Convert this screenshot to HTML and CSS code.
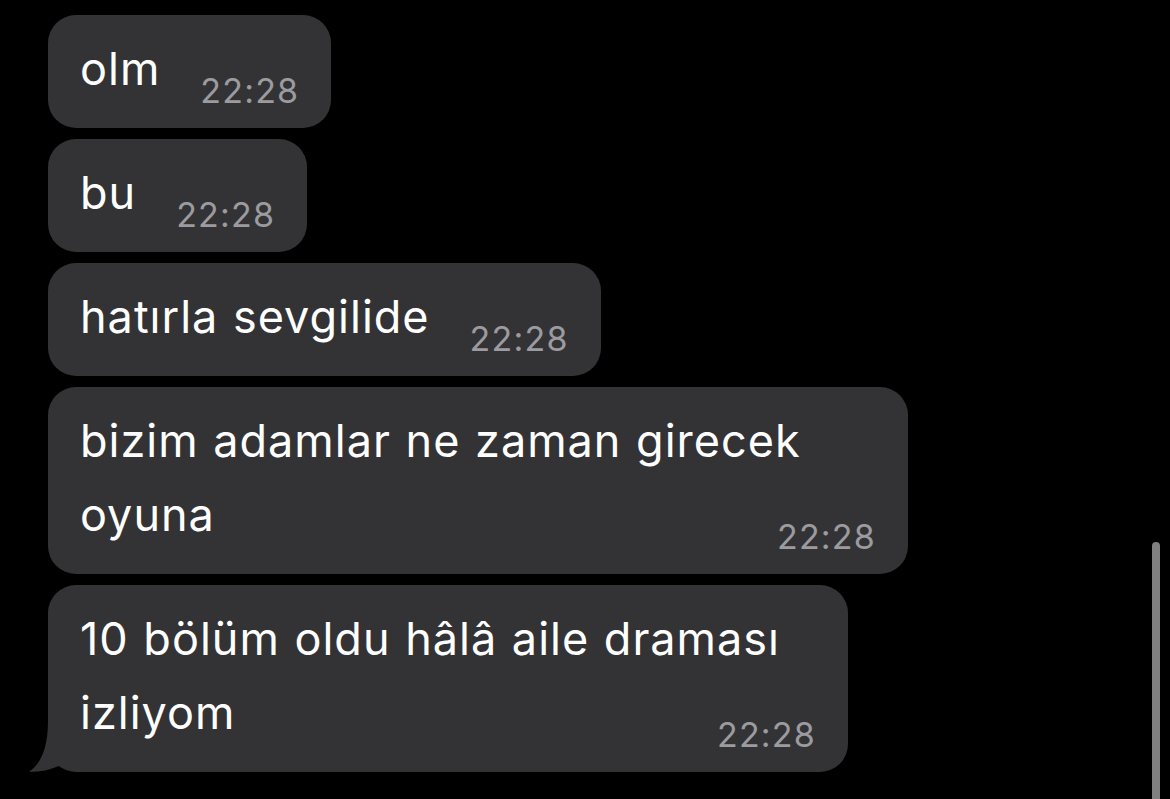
FILE: index.html
```html
<!DOCTYPE html>
<html lang="tr">
<head>
<meta charset="utf-8">
<title>Chat</title>
<link rel="stylesheet" href="styles.css">
</head>
<body>
<div class="chat">
  <div class="bubble">
    <span class="text">olm</span>
    <span class="time">22:28</span>
  </div>
  <div class="bubble">
    <span class="text">bu</span>
    <span class="time">22:28</span>
  </div>
  <div class="bubble">
    <span class="text">hatırla sevgilide</span>
    <span class="time">22:28</span>
  </div>
  <div class="bubble bubble-multi bubble-w860">
    <span class="text">bizim adamlar ne zaman girecek<br>oyuna</span>
    <span class="time">22:28</span>
  </div>
  <div class="bubble bubble-multi bubble-w800 bubble-tail">
    <span class="text">10 bölüm oldu hâlâ aile draması<br>izliyom</span>
    <span class="time">22:28</span>
    <svg class="tail" width="40" height="61" viewBox="0 0 40 61" aria-hidden="true">
      <path d="M20 0 L20 10 C20 38 12 54 1 60.5 C14 61.5 24 58 36 53 L36 0 Z" fill="#333335"/>
    </svg>
  </div>
</div>
<div class="scroll-indicator"></div>
</body>
</html>
```
FILE: styles.css
```css
html, body {
  margin: 0;
  padding: 0;
  background: #000;
  height: 100%;
  overflow: hidden;
}

body {
  font-family: Inter, "Noto Sans", "Liberation Sans", sans-serif;
  position: relative;
}

.chat {
  display: flex;
  flex-direction: column;
  align-items: flex-start;
  gap: 11px;
  padding: 15px 0 0 48px;
}

.bubble {
  position: relative;
  display: flex;
  align-items: flex-end;
  background: #333335;
  border-radius: 28px;
  padding: 17px 32px 22px 32px;
  box-sizing: border-box;
}

.text {
  color: #fff;
  font-size: 45px;
  line-height: 74px;
  letter-spacing: 1px;
  word-spacing: 1px;
}

.time {
  color: #9b9ba0;
  font-size: 34px;
  line-height: 34px;
  letter-spacing: 1.2px;
  margin-left: 40px;
  margin-bottom: -2px;
  white-space: nowrap;
}

.bubble-multi {
  display: grid;
}

.bubble-multi .text,
.bubble-multi .time {
  grid-area: 1 / 1;
}

.bubble-multi .time {
  justify-self: end;
  align-self: end;
  margin-left: 0;
}

.bubble-w860 {
  width: 860px;
}

.bubble-w800 {
  width: 800px;
}

.tail {
  position: absolute;
  left: -20px;
  bottom: 0;
  display: block;
}

.scroll-indicator {
  position: absolute;
  left: 1152px;
  top: 542px;
  width: 8px;
  height: 280px;
  border-radius: 4px;
  background: #808080;
}
```
